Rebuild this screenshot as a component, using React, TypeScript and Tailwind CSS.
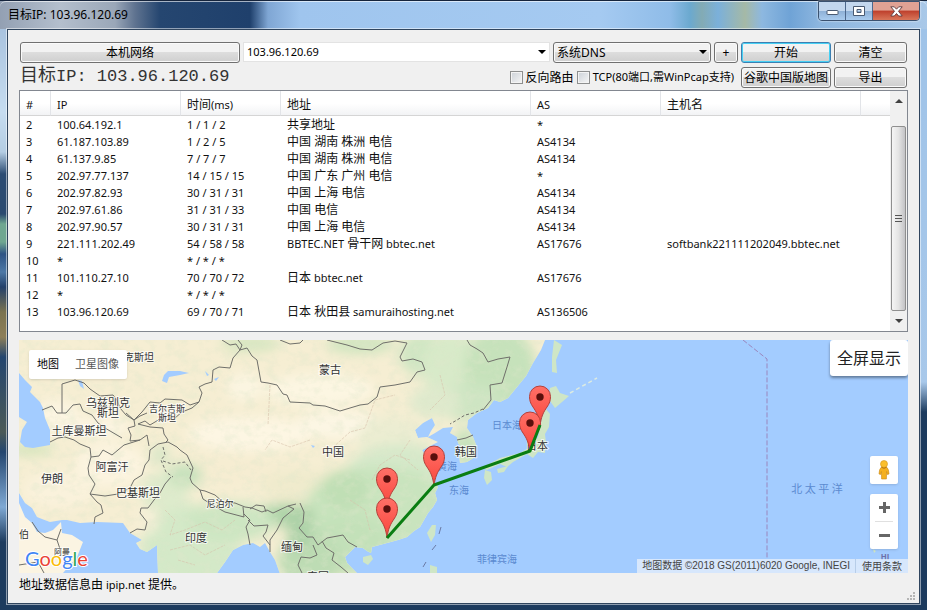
import { useState } from "react";

interface Hop {
  id: number;
  ip: string;
  time: string;
  address: string;
  as: string;
  host?: string;
}

const HOPS: Hop[] = [
  { id: 2, ip: "100.64.192.1", time: "1 / 1 / 2", address: "共享地址", as: "*" },
  { id: 3, ip: "61.187.103.89", time: "1 / 2 / 5", address: "中国 湖南 株洲 电信", as: "AS4134" },
  { id: 4, ip: "61.137.9.85", time: "7 / 7 / 7", address: "中国 湖南 株洲 电信", as: "AS4134" },
  { id: 5, ip: "202.97.77.137", time: "14 / 15 / 15", address: "中国 广东 广州 电信", as: "*" },
  { id: 6, ip: "202.97.82.93", time: "30 / 31 / 31", address: "中国 上海 电信", as: "AS4134" },
  { id: 7, ip: "202.97.61.86", time: "31 / 31 / 33", address: "中国 电信", as: "AS4134" },
  { id: 8, ip: "202.97.90.57", time: "30 / 31 / 31", address: "中国 上海 电信", as: "AS4134" },
  {
    id: 9,
    ip: "221.111.202.49",
    time: "54 / 58 / 58",
    address: "BBTEC.NET 骨干网 bbtec.net",
    as: "AS17676",
    host: "softbank221111202049.bbtec.net",
  },
  { id: 10, ip: "*", time: "* / * / *", address: "", as: "" },
  { id: 11, ip: "101.110.27.10", time: "70 / 70 / 72", address: "日本 bbtec.net", as: "AS17676" },
  { id: 12, ip: "*", time: "* / * / *", address: "", as: "" },
  { id: 13, ip: "103.96.120.69", time: "69 / 70 / 71", address: "日本 秋田县 samuraihosting.net", as: "AS136506" },
];

// map coordinates, see the viewBox in RouteMap
const MAINLAND =
  "M19,340 H545 L541,350 533,363 526,376 517,387 508,398 500,402 494,400 488,408 477,413 468,420 467,428 473,437 477,447 475,457 467,462 460,463 459,453 461,447 458,443 457,437 450,433 453,427 443,428 435,433 428,437 431,431 435,425 432,418 423,423 415,430 418,438 427,437 438,442 428,447 422,450 430,463 435,477 431,479 438,487 435,493 437,500 433,507 428,513 420,527 414,531 407,537 398,540 387,543 372,547 371,553 367,551 363,548 355,547 345,557 347,563 357,573 V574 H280 L275,560 270,552 265,543 260,547 253,543 243,545 233,550 225,562 217,573 H158 L157,545 147,552 140,549 136,543 142,540 130,533 123,523 97,522 80,523 67,520 62,520 50,522 42,519 37,517 32,508 25,503 19,493 Z";
const ARABIA =
  "M19,503 L25,517 32,523 37,532 45,533 53,530 61,522 62,533 72,535 83,542 77,557 63,573 H19 Z";
const CASPIAN =
  "M19,373 L25,380 32,387 30,392 40,402 43,408 45,418 50,430 50,445 33,448 25,447 20,442 22,430 27,422 19,417 Z";
const ISLANDS = [
  "M554,340 L562,345 556,360 557,373 552,372 552,357 Z",
  "M550,388 L556,386 560,393 569,396 562,402 555,408 550,401 Z",
  "M545,408 L550,414 549,427 545,434 546,443 545,453 538,452 533,458 527,454 513,462 507,467 500,464 487,470 482,468 500,458 520,453 530,447 538,437 542,417 Z",
  "M485,470 L491,472 492,480 487,485 484,478 Z",
  "M497,469 L508,466 504,472 498,473 Z",
  "M436,525 L432,525 427,533 431,542 435,535 Z",
  "M363,557 L371,555 373,559 368,565 363,562 Z",
  "M430,565 L437,567 437,573 430,573 Z",
  "M873,549 L876,551 874,553 Z",
];

const BORDERS = [
  "M222,340 L230,345 236,344 240,350 247,348 252,356 257,360 261,382 268,383 277,385 283,394 287,395 290,402 310,403 313,405 325,406 340,411 350,408 360,405 368,404 377,397 380,387 395,385 410,382 417,372 425,370 422,362 413,359 402,361 400,357 407,343 395,341 383,343 372,350 360,349 347,345 327,340",
  "M240,350 L242,345 238,340",
  "M240,350 L233,358 230,368 219,367 213,370 212,382 205,384 199,387 202,393 199,402 192,408 182,412 175,418 165,416 150,425 145,421 138,424",
  "M199,402 L190,405 182,400 165,399 160,403 150,402 142,412 134,420 126,413",
  "M134,420 L140,416 147,413",
  "M62,413 V384 L75,380 84,383 90,389 100,396 113,395 117,400 120,408 126,415 134,420",
  "M42,410 L52,406 57,413 66,413 73,405 80,404 83,411 92,415 98,423 105,428 122,438",
  "M50,442 L58,438 65,437 74,440 80,444 90,448 91,457 99,456 103,450 112,455 124,445 140,440 147,435 149,446",
  "M134,420 L135,426 128,428 131,435 130,441 140,440",
  "M138,424 L150,427 163,428 164,434 168,440 165,443",
  "M91,457 L88,468 89,475 95,484 90,494 97,502 101,505 103,513 95,517 94,524",
  "M90,494 L105,496 118,494 130,488 134,480 142,475 145,465 149,460 150,450 158,444 168,442 177,447 180,450 187,455 193,468 190,478 192,483 200,490 205,491 215,495 223,502 235,503 245,507 252,508 262,512 267,510 273,513 288,506 296,504",
  "M171,477 L165,484 160,493 154,500 148,508 141,508 140,513 147,522 145,530 137,529 130,533",
  "M200,490 L203,499 214,506 225,512 244,517 243,507",
  "M250,509 L256,505 264,506 266,512",
  "M244,514 L250,520 246,527 248,534 250,545",
  "M248,520 L254,526 268,525 266,532 263,536 270,545",
  "M288,506 L294,509 283,518 277,530 270,540 270,552",
  "M300,503 L304,512 303,523 299,528 307,537 313,537 318,545 327,538 343,535 348,542 357,547",
  "M322,541 L326,548 334,553 332,560 341,567 348,573",
  "M313,545 L317,555 310,558 301,557 298,565 302,573",
  "M467,340 L470,345 477,349 483,353 488,362 498,359 510,357 507,367 502,383 490,385 491,400 483,410",
  "M457,440 L466,438 473,435",
  "M32,522 L38,531 45,537 57,540 61,529",
  "M57,540 L60,549 50,561",
  "M19,565 L38,562 44,573",
  "M280,340 L290,344 300,343 303,340",
];

// [x, y, rx, ry, fill]
const TERRAIN: [number, number, number, number, string][] = [
  [250, 434, 62, 17, "#fdf6e3"],
  [320, 390, 55, 16, "#fcf6e2"],
  [340, 425, 45, 14, "#fcf6e4"],
  [110, 465, 35, 22, "#fcf4e0"],
  [55, 415, 24, 14, "#fcf5e2"],
  [100, 427, 30, 10, "#fcf5e2"],
  [245, 387, 18, 14, "#fbf5e1"],
  [60, 490, 36, 18, "#faf2dc"],
  [230, 470, 50, 14, "#f6edd2"],
  [300, 485, 40, 16, "#f0ebcd"],
  [390, 440, 34, 24, "#ecedd2"],
  [250, 344, 30, 8, "#d5e6c0"],
  [360, 345, 34, 9, "#cfe5bf"],
  [425, 355, 26, 22, "#cfe6c3"],
  [452, 366, 30, 34, "#d8eac9"],
  [500, 370, 36, 44, "#c6e2bb"],
  [466, 402, 36, 18, "#cee5c3"],
  [435, 402, 26, 16, "#dfeacd"],
  [466, 448, 14, 20, "#c8e3bd"],
  [400, 478, 56, 34, "#d6e9ca"],
  [380, 510, 76, 44, "#c9e4be"],
  [345, 490, 24, 20, "#c0dfb5"],
  [345, 545, 44, 30, "#c3e1b9"],
  [310, 560, 32, 28, "#bddcb4"],
  [285, 515, 30, 12, "#afd4a9"],
  [190, 550, 50, 46, "#d4e9c8"],
  [230, 522, 44, 20, "#cde6c2"],
  [165, 492, 24, 20, "#deebcc"],
  [160, 455, 10, 10, "#d9e7c8"],
  [185, 475, 18, 12, "#c8e2bd"],
  [148, 520, 10, 14, "#f6f0d8"],
  [30, 450, 24, 5, "#cfe3b8"],
  [300, 530, 12, 24, "#add2a8"],
];

const LABELS: [number, number, number, string][] = [
  [139, 361, 10, "克斯坦"],
  [108, 407, 11, "乌兹别克"],
  [108, 417, 11, "斯坦"],
  [79, 435, 11, "土库曼斯坦"],
  [167, 412, 9, "吉尔吉斯"],
  [167, 421, 9, "斯坦"],
  [112, 471, 11, "阿富汗"],
  [52, 483, 11, "伊朗"],
  [138, 497, 11, "巴基斯坦"],
  [220, 507, 9, "尼泊尔"],
  [196, 542, 11, "印度"],
  [292, 551, 11, "缅甸"],
  [62, 555, 8, "阿曼"],
  [24, 538, 10, "伯"],
  [330, 374, 11, "蒙古"],
  [333, 456, 11, "中国"],
  [466, 456, 11, "韩国"],
  [537, 450, 11, "日本"],
  [318, 581, 11, "泰国"],
];

const SEA_LABELS: [number, number, number, string][] = [
  [507, 429, 10, "日本海"],
  [447, 470, 10, "黄海"],
  [459, 494, 10, "东海"],
  [497, 563, 10, "菲律宾海"],
  [817, 493, 11, "北 太 平 洋"],
];

const PINS: [number, number][] = [
  [540, 426],
  [530, 452],
  [434, 486],
  [387, 508],
  [387, 538],
];

const GOOGLE: [string, string][] = [
  ["G", "#4285f4"],
  ["o", "#ea4335"],
  ["o", "#fbbc05"],
  ["g", "#4285f4"],
  ["l", "#34a853"],
  ["e", "#ea4335"],
];

const faceClass =
  "h-[21px] shrink-0 rounded-[3px] border bg-linear-to-b from-[#f2f2f2] from-50% via-[#dddddd] via-50% to-[#cfcfcf] text-xs leading-[19px] whitespace-nowrap";
const buttonClass = `${faceClass} border-[#707070] shadow-[inset_0_0_0_1px_#fafafa]`;
const defaultButtonClass = `${faceClass} border-[#3c7fb1] shadow-[inset_0_0_0_1px_#46d0f4]`;
const checkboxClass =
  "h-[13px] w-[13px] appearance-none border border-[#8e8f8f] bg-linear-to-br from-[#cdd2d8] to-[#f6f6f6] shadow-[inset_0_0_0_1px_#f4f4f4] checked:bg-[#3c7fb1]";

const RouteMap = () => (
  <svg
    className="absolute inset-0 h-full w-full bg-[#a3ccff]"
    viewBox="19 340 889 233"
    preserveAspectRatio="xMidYMid slice"
    fontFamily="'Noto Sans CJK SC', sans-serif"
  >
    <defs>
      <clipPath id="land">
        <path d={MAINLAND} />
      </clipPath>
      <filter id="soft" x="-30%" y="-30%" width="160%" height="160%">
        <feGaussianBlur stdDeviation="6" />
      </filter>
      <filter id="relief" x="0" y="0" width="100%" height="100%">
        <feTurbulence type="fractalNoise" baseFrequency="0.09 0.12" numOctaves="4" seed="8" />
        <feColorMatrix values="0 0 0 0 0.74  0 0 0 0 0.8  0 0 0 0 0.6  0 3 0 0 -1.35" />
      </filter>
      <linearGradient id="pin" x1="0" y1="0" x2="0" y2="1">
        <stop offset="0" stopColor="#ff7067" />
        <stop offset="1" stopColor="#f9463d" />
      </linearGradient>
    </defs>

    <path d={MAINLAND} fill="#f6eed3" />
    <path d={ARABIA} fill="#fbf4e2" />
    <g clipPath="url(#land)">
      <g filter="url(#soft)">
        {TERRAIN.map(([x, y, rx, ry, fill], i) => (
          <ellipse key={i} cx={x} cy={y} rx={rx} ry={ry} fill={fill} />
        ))}
      </g>
      <rect x="19" y="340" width="540" height="233" filter="url(#relief)" opacity="0.35" />
    </g>
    <path d={CASPIAN} fill="#a3ccff" />
    <g fill="#a3ccff">
      <path d="M164,375 L168,371 180,371 189,373 180,375 169,377 167,383 162,381 Z" />
      <path d="M78,380 L82,381 84,389 80,386 Z" />
      <path d="M214,379 L219,377 216,381 Z" />
      <path d="M311,445 L315,446 313,448 Z" />
      <path d="M205,371 L209,375 207,376 Z" />
    </g>
    {ISLANDS.map((d) => (
      <path key={d} d={d} fill="#cfe6c6" />
    ))}
    <path d="M570,393 L597,378" stroke="#dcebe2" strokeWidth="1.5" strokeDasharray="4 3" />

    <g fill="none" stroke="#6f6f6a" strokeWidth="1" strokeLinejoin="round">
      {BORDERS.map((d) => (
        <path key={d} d={d} />
      ))}
      <path d="M483,409 L474,413 465,415 457,420 450,424" strokeDasharray="3 2" />
      <path d="M163,447 L165,455 161,460 166,472 173,477 M163,461 L172,464 185,462 191,470" strokeDasharray="3 2" />
      <path d="M441,527 L439,534 M436,545 L432,550 M426,562 L423,567" stroke="#6b7aa5" />
      <path d="M743,340 L767,359 V558" stroke="#9a86bd" strokeDasharray="5 2" />
    </g>
    <g fill="none" stroke="#d5bfa8" strokeWidth="0.7" strokeDasharray="3 1" opacity="0.8">
      <path d="M310,440 L290,447 272,440 265,450 M270,385 L268,425 M330,450 L350,432 365,428 375,400 395,395 M372,480 L380,465 395,455 410,460 M350,500 L365,510 370,530 M410,440 L400,455 418,470 M440,375 L445,395 430,410" />
      <path d="M165,510 L175,520 170,535 185,530 205,522 222,530 235,520 M170,550 L190,545 205,555 225,545 M178,560 L195,565" />
    </g>

    <g fill="#333" stroke="#fff" strokeWidth="2" strokeOpacity="0.7" paintOrder="stroke" textAnchor="middle">
      {LABELS.map(([x, y, size, text]) => (
        <text key={`${x}-${y}`} x={x} y={y} fontSize={size}>
          {text}
        </text>
      ))}
    </g>
    <g fill="#5b8ad0" textAnchor="middle">
      {SEA_LABELS.map(([x, y, size, text]) => (
        <text key={text} x={x} y={y} fontSize={size}>
          {text}
        </text>
      ))}
    </g>
    <text x="885" y="560" fontSize="8" fontWeight="700" fill="#6d6fa8" textAnchor="middle">
      HI
    </text>

    {PINS.map(([x, y]) => (
      <g key={`${x}-${y}`} transform={`translate(${x} ${y})`}>
        <path
          d="M0,0 C-1,-9 -3.5,-14 -7,-19 C-9.5,-22.5 -10.5,-25.5 -10.5,-29.5 A10.5,10.5 0 0 1 10.5,-29.5 C10.5,-25.5 9.5,-22.5 7,-19 C3.5,-14 1,-9 0,0 Z"
          fill="url(#pin)"
          stroke="#b5403a"
          strokeWidth="1"
        />
        <circle cx="0" cy="-29" r="3.7" fill="#590f0c" />
      </g>
    ))}
    <polyline
      points="387,538 434,485 530,451 540,425"
      fill="none"
      stroke="#0a7d12"
      strokeWidth="3"
      strokeLinejoin="round"
    />
  </svg>
);

const Pegman = () => (
  <svg width="12" height="20" viewBox="0 0 12 20">
    <path
      d="M3,7.5 Q6,6 9,7.5 Q10.8,9 11,14 L9.3,14.5 L8.6,11.5 L8.4,19 H3.6 L3.4,11.5 L2.7,14.5 L1,14 Q1.2,9 3,7.5 Z"
      fill="#f5b120"
      stroke="#c98a17"
      strokeWidth="0.6"
    />
    <circle cx="6" cy="4" r="3.5" fill="#fbbf2c" stroke="#d2931c" strokeWidth="0.6" />
    <path d="M3.5,7.3 Q6,9.3 8.5,7.3" fill="none" stroke="#b87512" strokeWidth="1" />
  </svg>
);

const Arrow = ({ up, className }: { up?: boolean; className?: string }) => (
  <svg width="8" height="4" viewBox="0 0 8 4" className={className}>
    <path d={up ? "M4,0 L8,4 H0 Z" : "M0,0 H8 L4,4 Z"} fill="currentColor" />
  </svg>
);

const TitleBar = () => (
  <header className="flex h-7 items-start justify-between">
    <h1 className="pt-1 pl-px text-xs leading-[18px] text-black">目标IP: 103.96.120.69</h1>
    <div className="-mt-px flex h-5 overflow-hidden rounded-b-[4px] border border-[#3b5270] shadow-[0_0_2px_#ffffff]">
      <button
        aria-label="最小化"
        className="flex w-[27px] items-center justify-center border-r border-[#4d688c] bg-linear-to-b from-[#c3d7ee] from-50% via-[#8eb0d6] via-50% to-[#a9cbee]"
      >
        <svg width="13" height="7" viewBox="0 0 13 7">
          <rect x="1" y="2.5" width="11" height="4" rx="0.5" fill="#fff" stroke="#4a5a72" />
        </svg>
      </button>
      <button
        aria-label="最大化"
        className="flex w-[27px] items-center justify-center border-r border-[#4d688c] bg-linear-to-b from-[#c3d7ee] from-50% via-[#8eb0d6] via-50% to-[#a9cbee]"
      >
        <svg width="12" height="10" viewBox="0 0 12 10">
          <path
            d="M0.5,0.5 H11.5 V9.5 H0.5 Z M4,3.5 V6.5 H8 V3.5 Z"
            fill="#fff"
            fillRule="evenodd"
            stroke="#4a5a72"
          />
        </svg>
      </button>
      <button
        aria-label="关闭"
        className="flex w-[46px] items-center justify-center bg-linear-to-b from-[#e0a294] from-45% via-[#be3f2c] via-50% to-[#d8765a]"
      >
        <svg width="13" height="11" viewBox="0 0 13 11">
          <path
            d="M0.8,0.8 H4.3 L6.5,3.2 L8.7,0.8 H12.2 L8.5,5.3 L12.2,10 H8.7 L6.5,7.5 L4.3,10 H0.8 L4.5,5.3 Z"
            fill="#fff"
            stroke="#5c3a3d"
            strokeWidth="0.9"
          />
        </svg>
      </button>
    </div>
  </header>
);

const HopTable = () => (
  <div className="mt-0.5 flex border border-[#828790] bg-white">
    <div className="min-w-0 flex-1 pb-[11px]">
      <table className="w-full table-fixed border-separate border-spacing-0 text-left text-[11px] text-[#111]">
        <colgroup>
          <col className="w-[31px]" />
          <col className="w-[130px]" />
          <col className="w-[100px]" />
          <col className="w-[250px]" />
          <col className="w-[130px]" />
          <col className="w-[200px]" />
          <col />
        </colgroup>
        <thead>
          <tr className="bg-linear-to-b from-white from-50% to-[#f1f2f4] [&>th]:h-[25px] [&>th]:border-r [&>th]:border-b [&>th]:border-r-[#e2e4e8] [&>th]:border-b-[#d5d5d5] [&>th]:px-1.5 [&>th]:pt-0.5 [&>th]:pb-0 [&>th]:leading-[17px] [&>th]:font-normal [&>th:last-child]:border-r-0">
            <th>#</th>
            <th>IP</th>
            <th>
              <span className="text-xs leading-[17px]">时间</span>(ms)
            </th>
            <th className="text-xs">地址</th>
            <th>AS</th>
            <th className="text-xs">主机名</th>
            <th />
          </tr>
        </thead>
        <tbody>
          {HOPS.map((hop) => (
            <tr key={hop.id} className="h-[17px] leading-[17px] whitespace-nowrap [&>td]:px-1.5 [&>td]:py-0">
              <td>{hop.id}</td>
              <td>{hop.ip}</td>
              <td>{hop.time}</td>
              <td>
                {hop.address.split(" ").map((word, i) => (
                  <span key={i} className={/^[\x20-\x7e]+$/.test(word) ? "" : "text-xs leading-[17px]"}>
                    {i > 0 && " "}
                    {word}
                  </span>
                ))}
              </td>
              <td>{hop.as}</td>
              <td>{hop.host}</td>
              <td />
            </tr>
          ))}
        </tbody>
      </table>
    </div>
    <div className="flex w-[17px] flex-col items-center bg-[#f0f0f0] text-[#404040]">
      <button aria-label="向上滚动" className="flex h-[35px] w-full justify-center pt-2">
        <Arrow up />
      </button>
      <div className="flex w-[15px] flex-1 flex-col items-center justify-center gap-0.5 rounded-[2px] border border-[#8f8f8f] bg-linear-to-r from-[#f5f5f5] via-[#e4e4e4] to-[#c3c3c6]">
        <span className="h-px w-[7px] bg-[#555]" />
        <span className="h-px w-[7px] bg-[#555]" />
        <span className="h-px w-[7px] bg-[#555]" />
      </div>
      <button aria-label="向下滚动" className="flex h-5 w-full items-center justify-center">
        <Arrow />
      </button>
    </div>
  </div>
);

const App = () => {
  const [target, setTarget] = useState("103.96.120.69");
  const [reverse, setReverse] = useState(false);
  const [tcp, setTcp] = useState(false);

  return (
    <div className="flex min-h-screen flex-col border-t border-[#15243c] bg-[#1d3b5e] font-['Noto_Sans','Noto_Sans_CJK_SC',sans-serif] text-black">
      <div className="-mb-[28px] h-[28px] bg-[linear-gradient(to_right,#93a0b3_0px,#b4bfcd_60px,#9aa7b8_115px,#5f7390_135px,#254670_160px,#1f406c_250px,#7fa6d4_268px,#9fc5ee_300px,#a5caf1_600px,#8fbce8_670px,#6ba9cf_690px,#83abb4_702px,#7bb0da_718px,#a5b9a6_745px,#8db8e0_762px,#6fa3d6_790px,#8db6df_820px,#a9c8e8_100%)]" />
      <div className="flex flex-1 flex-col rounded-t-[6px] border-t border-white/60 bg-[linear-gradient(to_bottom,transparent_27px,#a9c3df_27px,#c6dcf0_110px,#b4cde3_150px,#2c4c73_172px,#2a4a70_212px,#6fa791_222px,#6fa791_240px,#2e5384_252px,#4d78a6_270px,#23406a_285px,#7a7350_310px,#8d7f58_335px,#24466f_355px,#4b5a57_430px,#24466f_450px,#7fa9d4_505px,#1d3b5e_540px,#1d3b5e_100%),linear-gradient(to_bottom,transparent_27px,#9fc3e8_27px,#a8c8ea_380px,#1d3b5e_410px,#1d3b5e_100%)] bg-[length:8px_100%,8px_100%] bg-[position:left_top,right_top] bg-no-repeat px-[7px] pb-1.5">
        <TitleBar />
        <main className="-mt-px flex flex-1 flex-col border border-[#30455e] bg-[#f0f0f0] px-[11px] pt-3 outline outline-white/50">
          <div className="flex gap-[3px] px-px">
            <button className={`${buttonClass} w-[220px]`}>本机网络</button>
            <div className="relative flex h-5 min-w-0 flex-1">
              <input
                aria-label="目标地址"
                className="w-full border border-[#e3e3e3] bg-white px-[3px] text-[11px] leading-[18px] outline-none"
                value={target}
                onChange={(e) => setTarget(e.target.value)}
              />
              <button aria-label="历史记录" className="absolute inset-y-0 right-1 flex items-center">
                <Arrow />
              </button>
            </div>
            <div className="relative flex w-[158px] shrink-0">
              <select aria-label="DNS" className={`${buttonClass} w-full appearance-none px-[3px] text-left`}>
                <option>系统DNS</option>
              </select>
              <Arrow className="pointer-events-none absolute top-2 right-1" />
            </div>
            <button aria-label="添加" className={`${buttonClass} w-6`}>
              +
            </button>
            <button className={`${defaultButtonClass} w-[90px]`}>开始</button>
            <button className={`${buttonClass} w-[73px]`}>清空</button>
          </div>

          <div className="mt-1 flex items-center gap-[3px] px-px">
            <h2 className="h-[21px] flex-1 font-['Liberation_Mono','Noto_Sans_CJK_SC',monospace] text-[17px] leading-[19px] whitespace-nowrap text-[#333]">
              <span className="text-lg leading-[19px]">目标</span>IP: 103.96.120.69
            </h2>
            <div className="mr-1 flex items-center gap-[3px] text-[11px] whitespace-nowrap">
              <input
                id="reverse"
                type="checkbox"
                className={checkboxClass}
                checked={reverse}
                onChange={(e) => setReverse(e.target.checked)}
              />
              <label htmlFor="reverse" className="text-xs">
                反向路由
              </label>
              <input
                id="tcp"
                type="checkbox"
                className={checkboxClass}
                checked={tcp}
                onChange={(e) => setTcp(e.target.checked)}
              />
              <label htmlFor="tcp">TCP(80端口,需WinPcap支持)</label>
            </div>
            <button className={`${buttonClass} w-[90px]`}>谷歌中国版地图</button>
            <button className={`${buttonClass} w-[73px]`}>导出</button>
          </div>

          <HopTable />

          <section className="relative mt-2 min-h-[233px] flex-1 overflow-hidden">
            <RouteMap />
            <div className="absolute top-2.5 left-2.5 flex h-[29px] rounded-[2px] bg-white text-[11px] shadow-sm">
              <button className="px-2 text-black">地图</button>
              <button className="px-2 text-[#565656]">卫星图像</button>
            </div>
            <button className="absolute top-0 right-0 h-9 rounded-[3px] bg-white px-[7px] text-base text-[#222] shadow-[0_2px_3px_rgba(0,0,0,0.4)]">
              全屏显示
            </button>
            <div className="absolute right-2.5 bottom-6 flex w-7 flex-col gap-2.5">
              <button
                aria-label="街景"
                className="flex h-7 items-center justify-center rounded-[2px] bg-white shadow-sm"
              >
                <Pegman />
              </button>
              <div className="flex flex-col items-center rounded-[2px] bg-white shadow-sm">
                <button aria-label="放大" className="flex h-[27px] w-full items-center justify-center">
                  <svg width="11" height="11" viewBox="0 0 11 11">
                    <path d="M4,0 H7 V4 H11 V7 H7 V11 H4 V7 H0 V4 H4 Z" fill="#666" />
                  </svg>
                </button>
                <span className="h-px w-[18px] bg-[#e0e0e0]" />
                <button aria-label="缩小" className="flex h-[27px] w-full items-center justify-center">
                  <svg width="11" height="3" viewBox="0 0 11 3">
                    <rect width="11" height="3" fill="#666" />
                  </svg>
                </button>
              </div>
            </div>
            <svg className="absolute bottom-0 left-1" width="72" height="28" viewBox="0 0 72 28">
              <text
                x="2"
                y="21"
                fontSize="20"
                fontFamily="Lato, sans-serif"
                stroke="#fff"
                strokeWidth="2"
                paintOrder="stroke"
              >
                {GOOGLE.map(([letter, fill], i) => (
                  <tspan key={i} fill={fill}>
                    {letter}
                  </tspan>
                ))}
              </text>
            </svg>
            <div className="absolute right-0 bottom-0 flex h-3.5 items-center bg-[#e4eefb]/80 text-[10px] leading-[14px] whitespace-nowrap text-[#444]">
              <span className="px-[5px] font-['Liberation_Sans','Noto_Sans_CJK_SC',sans-serif]">
                地图数据 ©2018 GS(2011)6020 Google, INEGI
              </span>
              <a href="#terms" className="border-l border-[#b7cde8] px-1.5">
                使用条款
              </a>
            </div>
          </section>

          <footer className="relative h-[30px] text-[11px] leading-6">
            <span className="text-xs">地址数据信息由</span> ipip.net <span className="text-xs">提供。</span>
            <svg className="absolute -right-2 bottom-0.5" width="9" height="9" viewBox="0 0 9 9" fill="#b5b5b5">
              <path d="M6,0 h2 v2 h-2 Z M6,3 h2 v2 h-2 Z M3,3 h2 v2 h-2 Z M6,6 h2 v2 h-2 Z M3,6 h2 v2 h-2 Z M0,6 h2 v2 h-2 Z" />
            </svg>
          </footer>
        </main>
      </div>
    </div>
  );
};

export default App;
